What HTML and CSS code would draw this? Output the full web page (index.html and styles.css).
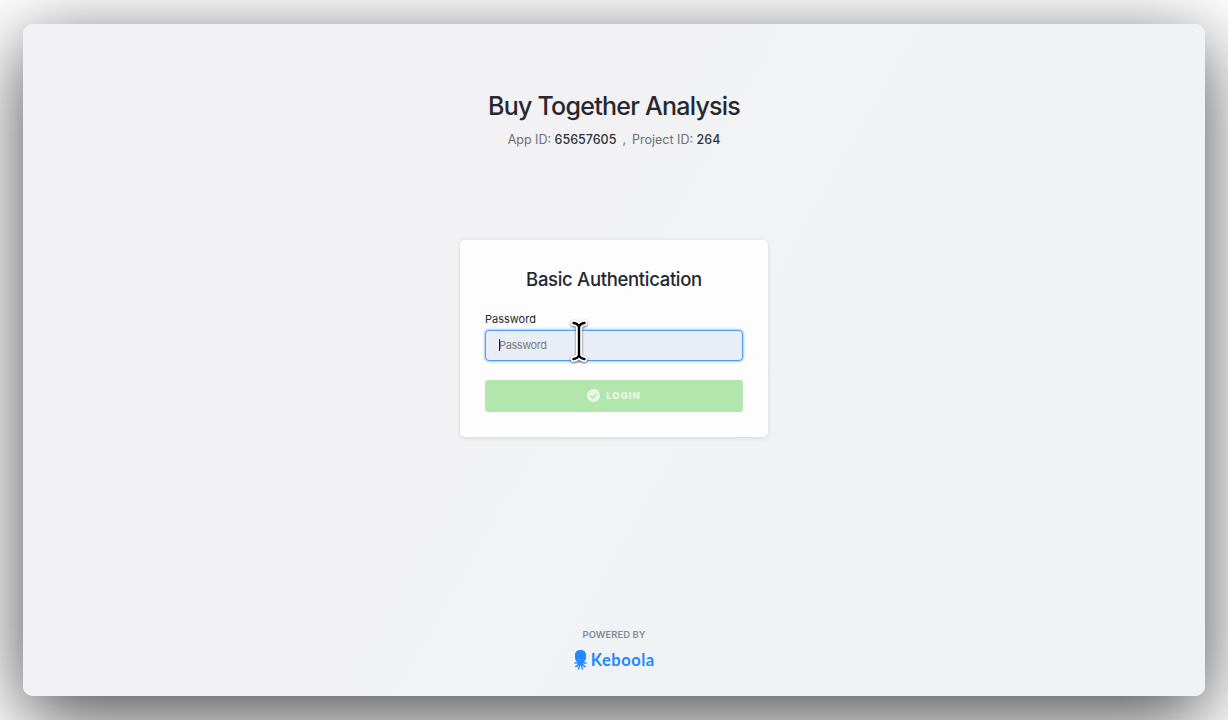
FILE: index.html
```html
<!DOCTYPE html>
<html lang="en">
<head>
	<meta charset="UTF-8">
	<title>Buy Together Analysis</title>
	<link rel="stylesheet" href="styles.css">
</head>
<body>
	<div class="window">
		<div class="header">
			<h1>Buy Together Analysis</h1>
			<p><span>App ID: <b>65657605</b></span><i>,</i><span>Project ID: <b>264</b></span></p>
		</div>

		<form class="card">
			<h2>Basic Authentication</h2>
			<label for="password">Password</label>
			<div class="field">
				<input type="password" id="password" placeholder="Password">
				<span class="caret"></span>
				<!-- mouse pointer -->
				<svg class="cursor" width="20" height="44" viewBox="0 0 20 44">
					<path class="outline" d="M4.500 4Q9 4.500 10 8Q11 4.500 15.500 4M10 7V37M4.500 40Q9 39.500 10 36Q11 39.500 15.500 40"/>
					<path class="beam" d="M4.500 4Q9 4.500 10 8Q11 4.500 15.500 4M10 7V37M4.500 40Q9 39.500 10 36Q11 39.500 15.500 40"/>
				</svg>
			</div>
			<button type="button" class="btn" disabled>
				<svg width="13" height="13" viewBox="0 0 13 13">
					<circle cx="6.5" cy="6.5" r="6.5" fill="#e9f8e7"/>
					<path d="M3.500 6.800L5.600 8.900L9.700 4.700" fill="none" stroke="#b2e6ac" stroke-width="1.500"/>
				</svg>
				<span>LOGIN</span>
			</button>
		</form>

		<div class="footer">
			<p>POWERED BY</p>
			<div class="logo">
				<svg width="13" height="20" viewBox="0 0 13 20">
					<path fill="#2188ff" d="M1 5Q1 0 6.500 0Q12 0 12 5V7.500Q12 10 10.500 11.200H2.500Q1 10 1 7.500Z"/>
					<path fill="none" stroke="#2188ff" stroke-width="1.500" stroke-linecap="round" d="M4 10.500Q4 13.500 1 13M9 10.500Q9 13.500 12 13M5 11Q5.200 15.500 1.800 16.500M8 11Q7.800 15.500 11.200 16.500M5.800 12Q6 16 4.500 19M7.200 12Q7 16 8.500 19"/>
					<path fill="none" stroke="#8fc3fc" stroke-width="0.700" d="M4 9.500H5.500M7.500 9.500H9"/>
				</svg>
				<span>Keboola</span>
			</div>
		</div>
	</div>
</body>
</html>
```

FILE: styles.css
```css
*{
	margin: 0;
	padding: 0;
	box-sizing: border-box;
}
body{
	height: 720px;
	padding: 24px 23px;
	overflow: hidden;
	background: #ffffff;
	font-family: Inter, "Liberation Sans", sans-serif;
	color: #25282d;
}
.window{
	display: flex;
	flex-direction: column;
	align-items: center;
	height: 672px;
	border-radius: 10px;
	background: linear-gradient(120deg, #f2f2f4 0%, #f2f2f4 44%, #eff3f6 66%, #eff3f6 100%);
	box-shadow: 0 20px 78px rgba(0,0,0,0.72);
}
.header{
	padding-top: 66px;
	text-align: center;
}
.header h1{
	line-height: 32px;
	font-size: 25px;
	font-weight: 500;
	letter-spacing: -0.75px;
}
.header p{
	margin-top: 8px;
	line-height: 20px;
	font-size: 12.5px;
	color: #6c6f74;
}
.header b{
	font-weight: 500;
	color: #303338;
}
.header i{
	margin: 0 6px;
	font-style: normal;
}
/*登录框*/
.card{
	width: 308px;
	height: 197px;
	margin-top: 90px;
	padding: 27px 25px 0;
	border-radius: 5px;
	background: #fdfdfe;
	box-shadow: 0 1px 4px rgba(60,70,80,0.16);
}
.card h2{
	line-height: 24px;
	text-align: center;
	font-size: 18.5px;
	font-weight: 500;
	letter-spacing: -0.32px;
}
.card label{
	display: block;
	margin-top: 20px;
	line-height: 16px;
	font-size: 11px;
}
.field{
	position: relative;
	margin-top: 3px;
}
.field input{
	display: block;
	width: 258px;
	height: 31px;
	padding: 0 13px 2px;
	border: 1px solid #509cef;
	border-radius: 4px;
	outline: none;
	background: #e9edf5;
	box-shadow: 0 0 2px 1px #a3d0fb;
	font-family: inherit;
	font-size: 11px;
	letter-spacing: -0.4px;
}
.field input::placeholder{
	color: #797c81;
}
.caret{
	position: absolute;
	left: 14px;
	top: 9px;
	width: 1px;
	height: 12px;
	background: #222222;
}
.cursor{
	position: absolute;
	left: 84px;
	top: -11px;
	overflow: visible;
	fill: none;
	stroke-linecap: round;
	stroke-linejoin: round;
}
.cursor .outline{
	stroke: #ffffff;
	stroke-width: 6;
	filter: drop-shadow(0 1px 1px rgba(0,0,0,0.6));
}
.cursor .beam{
	stroke: #000000;
	stroke-width: 2.4;
}
.btn{
	display: flex;
	align-items: center;
	justify-content: center;
	gap: 6px;
	width: 258px;
	height: 32px;
	margin-top: 19px;
	padding-bottom: 1px;
	border: none;
	border-radius: 3px;
	background: #b2e6ac;
	color: #e9f8e7;
	font-family: inherit;
	font-size: 9.5px;
	font-weight: 800;
	letter-spacing: 1px;
}
.footer{
	margin-top: auto;
	padding-bottom: 26px;
	text-align: center;
}
.footer p{
	line-height: 14px;
	font-size: 9.500px;
	font-weight: 600;
	color: #858a92;
}
.logo{
	display: flex;
	align-items: center;
	justify-content: center;
	gap: 4px;
	height: 20px;
	margin-top: 8px;
	font-family: Lato, sans-serif;
	font-size: 16.5px;
	font-weight: 700;
	letter-spacing: 0.5px;
	color: #2188ff;
}
.logo span{
	margin-right: -0.5px;
}
```
